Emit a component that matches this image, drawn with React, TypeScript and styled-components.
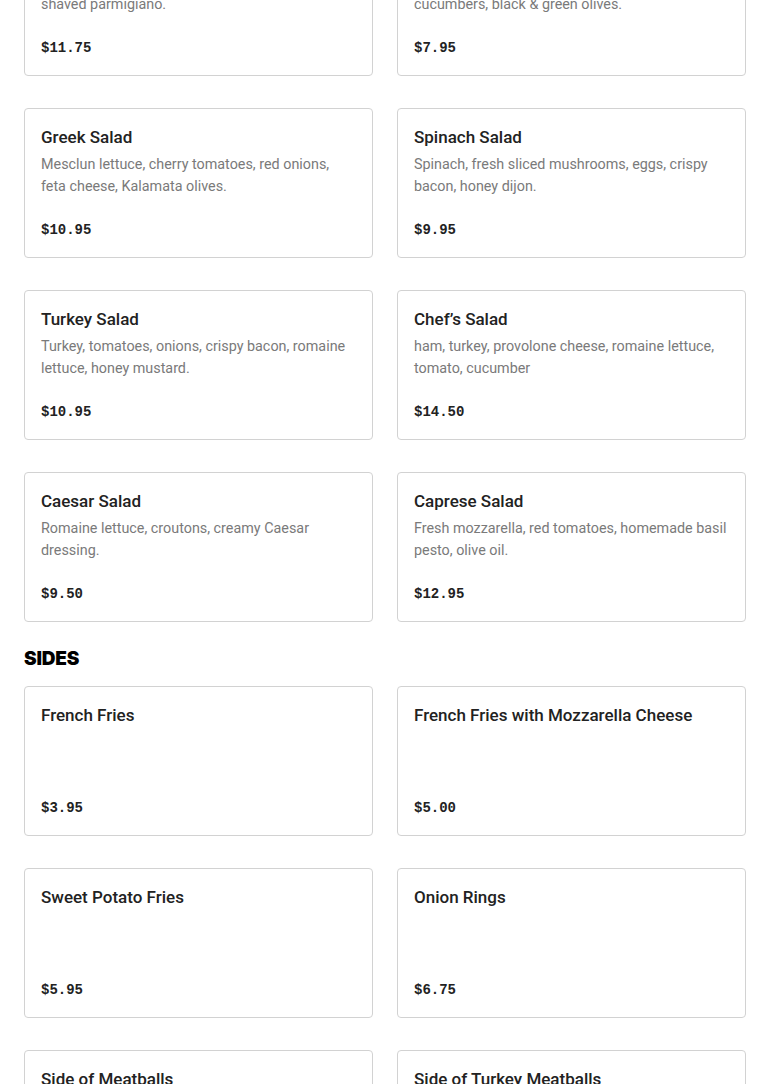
import styled, { createGlobalStyle } from "styled-components";

interface MenuItem {
  name: string;
  description?: string;
  price: string;
}

interface Section {
  title?: string;
  items: MenuItem[];
}

const sections: Section[] = [
  {
    items: [
      {
        name: "Arugula Salad",
        description: "Mesclun lettuce, cherry tomatoes, red onions, shaved parmigiano.",
        price: "$11.75",
      },
      {
        name: "Garden Salad",
        description: "Mixed greens, tomatoes, red onions, carrots, cucumbers, black & green olives.",
        price: "$7.95",
      },
      {
        name: "Greek Salad",
        description: "Mesclun lettuce, cherry tomatoes, red onions, feta cheese, Kalamata olives.",
        price: "$10.95",
      },
      {
        name: "Spinach Salad",
        description: "Spinach, fresh sliced mushrooms, eggs, crispy bacon, honey dijon.",
        price: "$9.95",
      },
      {
        name: "Turkey Salad",
        description: "Turkey, tomatoes, onions, crispy bacon, romaine lettuce, honey mustard.",
        price: "$10.95",
      },
      {
        name: "Chef’s Salad",
        description: "ham, turkey, provolone cheese, romaine lettuce, tomato, cucumber",
        price: "$14.50",
      },
      {
        name: "Caesar Salad",
        description: "Romaine lettuce, croutons, creamy Caesar dressing.",
        price: "$9.50",
      },
      {
        name: "Caprese Salad",
        description: "Fresh mozzarella, red tomatoes, homemade basil pesto, olive oil.",
        price: "$12.95",
      },
    ],
  },
  {
    title: "Sides",
    items: [
      { name: "French Fries", price: "$3.95" },
      { name: "French Fries with Mozzarella Cheese", price: "$5.00" },
      { name: "Sweet Potato Fries", price: "$5.95" },
      { name: "Onion Rings", price: "$6.75" },
      { name: "Side of Meatballs", price: "$6.95" },
      { name: "Side of Turkey Meatballs", price: "$7.95" },
    ],
  },
];

const GlobalStyle = createGlobalStyle`
  body {
    margin: 0;
    background: #fff;
    font-family: "Roboto", "Liberation Sans", sans-serif;
    color: #222;
    overflow: hidden;
  }
`;

const Page = styled.main`
  padding: 0 24px 40px;
  margin-top: -74px;
`;

const SectionTitle = styled.h2`
  margin: 0;
  padding: 24px 0 14px;
  font-family: "Inter", "Liberation Sans", sans-serif;
  font-size: 19px;
  line-height: 26px;
  font-weight: 900;
  letter-spacing: -0.2px;
  text-transform: uppercase;
  color: #000;
`;

const Grid = styled.div`
  display: grid;
  grid-template-columns: 1fr 1fr;
  column-gap: 24px;
  row-gap: 32px;
`;

const Card = styled.div`
  display: flex;
  flex-direction: column;
  box-sizing: border-box;
  height: 150px;
  padding: 16px 16px 15px;
  border: 1px solid #d2d2d2;
  border-radius: 4px;
  background: #fff;
`;

const Name = styled.h3`
  margin: 0;
  font-size: 17px;
  line-height: 24px;
  font-weight: 500;
  color: #222;
`;

const Description = styled.p`
  margin: 5px 0 0;
  font-size: 14.35px;
  line-height: 22px;
  color: #7a7a7a;
`;

const Price = styled.span`
  margin-top: auto;
  font-family: "Liberation Mono", "DejaVu Sans Mono", monospace;
  font-size: 14px;
  line-height: 24px;
  font-weight: 700;
  color: #222;
`;

function App() {
  return (
    <>
      <GlobalStyle />
      <Page>
        {sections.map((section, i) => (
          <section key={i}>
            {section.title && <SectionTitle>{section.title}</SectionTitle>}
            <Grid>
              {section.items.map((item) => (
                <Card key={item.name}>
                  <Name>{item.name}</Name>
                  {item.description && (
                    <Description>{item.description}</Description>
                  )}
                  <Price>{item.price}</Price>
                </Card>
              ))}
            </Grid>
          </section>
        ))}
      </Page>
    </>
  );
}

export default App;
